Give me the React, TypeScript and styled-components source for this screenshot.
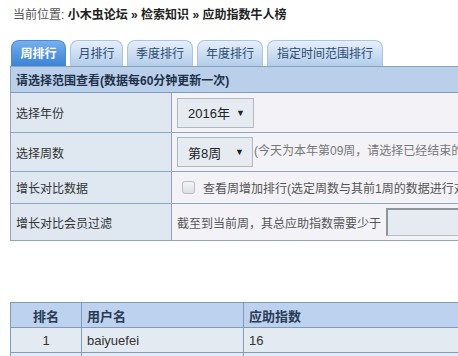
import React from "react";
import styled, { createGlobalStyle } from "styled-components";

const GlobalStyle = createGlobalStyle`
  html, body {
    margin: 0;
    padding: 0;
    background: #fff;
    overflow: hidden;
  }
  body {
    font-family: "Liberation Sans", "Noto Sans CJK SC", sans-serif;
    font-size: 12px;
    color: #333;
  }
`;

const Page = styled.div`
  width: 640px;
  padding: 7px 0 0 10px;
`;

const Crumb = styled.div`
  height: 16px;
  line-height: 16px;
  padding-left: 3px;
  color: #555;
  b {
    color: #222;
  }
`;

const Tabs = styled.div`
  display: flex;
  gap: 4px;
  margin-top: 17px;
  padding-left: 1px;
  height: 26px;
  align-items: flex-end;
`;

const Tab = styled.div<{ $active?: boolean; $w: number }>`
  width: ${(p) => p.$w}px;
  height: 26px;
  box-sizing: border-box;
  border-radius: 8px 8px 0 0;
  border: 1px solid ${(p) => (p.$active ? "#4a8ad6" : "#a9c4e4")};
  border-bottom: none;
  background: ${(p) =>
    p.$active
      ? "linear-gradient(#78b0ec, #4f92df 60%, #3f84d4)"
      : "linear-gradient(#e6effa, #c7dbf1 60%, #b3cdea)"};
  color: ${(p) => (p.$active ? "#fff" : "#2c4a73")};
  font-weight: ${(p) => (p.$active ? "bold" : "normal")};
  text-align: center;
  line-height: 26px;
`;

const Grid = styled.table`
  width: 620px;
  border-collapse: collapse;
  border: 1px solid #8aa3c1;
`;

const Head = styled.td`
  height: 26px;
  box-sizing: border-box;
  background: #bad0ea;
  border-bottom: 1px solid #7f9cbd;
  padding: 0 5px;
  font-weight: bold;
  color: #1f3049;
`;

const Label = styled.td<{ $h: number }>`
  width: 161px;
  height: ${(p) => p.$h}px;
  box-sizing: border-box;
  background: #dfe7f1;
  border: 1px solid #8ea6c3;
  padding: 0 5px;
  color: #333;
`;

const Cell = styled.td`
  background: #f3f3f7;
  border: 1px solid #8ea6c3;
  padding: 0 5px;
  white-space: nowrap;
  color: #333;
`;

const Select = styled.span<{ $w: number }>`
  display: inline-flex;
  align-items: center;
  justify-content: space-between;
  vertical-align: middle;
  width: ${(p) => p.$w}px;
  height: 30px;
  box-sizing: border-box;
  padding: 0 8px 0 10px;
  background: #e6ebf2;
  border: 1px solid #aeb9c6;
  color: #222;
  font-size: 13px;
`;

const Arrow = styled.span`
  font-size: 9px;
  color: #222;
`;

const Note = styled.span`
  color: #777;
  margin-left: 1px;
`;

const Check = styled.span`
  display: inline-block;
  vertical-align: middle;
  width: 11px;
  height: 11px;
  margin: 0 8px 0 5px;
  border: 1px solid #b9bec6;
  border-radius: 3px;
  background: linear-gradient(#f4f5f7, #dcdfe4);
`;

const Hint = styled.span`
  color: #555;
  vertical-align: middle;
`;

const Field = styled.span`
  display: inline-block;
  vertical-align: middle;
  width: 120px;
  height: 28px;
  box-sizing: border-box;
  margin-left: 5px;
  border: 1px solid #b7bcc3;
  border-top: 2px solid #8f949b;
  border-left: 2px solid #8f949b;
  background: #e6ebf2;
`;

const Gap = styled.div`
  height: 61px;
`;

const Rank = styled.table`
  width: 620px;
  border-collapse: collapse;
  border: 1px solid #7f9cbd;
`;

const Th = styled.td<{ $w?: number; $center?: boolean }>`
  width: ${(p) => (p.$w ? `${p.$w}px` : "auto")};
  height: 25px;
  box-sizing: border-box;
  background: #bcd2ee;
  border: 1px solid #7f9cbd;
  padding: 0 5px;
  font-weight: bold;
  font-size: 13px;
  color: #2a3b55;
  text-align: ${(p) => (p.$center ? "center" : "left")};
`;

const Td = styled.td<{ $center?: boolean }>`
  height: 25px;
  box-sizing: border-box;
  background: #e4eaf2;
  border: 1px solid #7f9cbd;
  padding: 0 5px;
  font-size: 13px;
  color: #333;
  text-align: ${(p) => (p.$center ? "center" : "left")};
`;

const tabs = [
  { name: "周排行", w: 55 },
  { name: "月排行", w: 53 },
  { name: "季度排行", w: 66 },
  { name: "年度排行", w: 66 },
  { name: "指定时间范围排行", w: 116 },
];

const App = () => {
  return (
    <Page>
      <GlobalStyle />
      <Crumb>
        当前位置: <b>小木虫论坛</b> <b>»</b> <b>检索知识</b> <b>»</b> <b>应助指数牛人榜</b>
      </Crumb>
      <Tabs>
        {tabs.map((t, i) => (
          <Tab key={t.name} $w={t.w} $active={i === 0}>
            {t.name}
          </Tab>
        ))}
      </Tabs>
      <Grid>
        <tbody>
          <tr>
            <Head colSpan={2}>请选择范围查看(数据每60分钟更新一次)</Head>
          </tr>
          <tr>
            <Label $h={40}>选择年份</Label>
            <Cell>
              <Select $w={77}>
                2016年<Arrow>▼</Arrow>
              </Select>
            </Cell>
          </tr>
          <tr>
            <Label $h={39}>选择周数</Label>
            <Cell>
              <Select $w={76}>
                第8周<Arrow>▼</Arrow>
              </Select>
              <Note>(今天为本年第09周，请选择已经结束的周数)</Note>
            </Cell>
          </tr>
          <tr>
            <Label $h={32}>增长对比数据</Label>
            <Cell>
              <Check />
              <Hint>查看周增加排行(选定周数与其前1周的数据进行对比)</Hint>
            </Cell>
          </tr>
          <tr>
            <Label $h={37}>增长对比会员过滤</Label>
            <Cell>
              <Hint>截至到当前周，其总应助指数需要少于</Hint>
              <Field />
            </Cell>
          </tr>
        </tbody>
      </Grid>
      <Gap />
      <Rank>
        <tbody>
          <tr>
            <Th $w={71} $center>
              排名
            </Th>
            <Th $w={162}>用户名</Th>
            <Th>应助指数</Th>
          </tr>
          <tr>
            <Td $center>1</Td>
            <Td>baiyuefei</Td>
            <Td>16</Td>
          </tr>
          <tr>
            <Td $center>2</Td>
            <Td>xiaomuchong</Td>
            <Td>12</Td>
          </tr>
        </tbody>
      </Rank>
    </Page>
  );
};

export default App;
